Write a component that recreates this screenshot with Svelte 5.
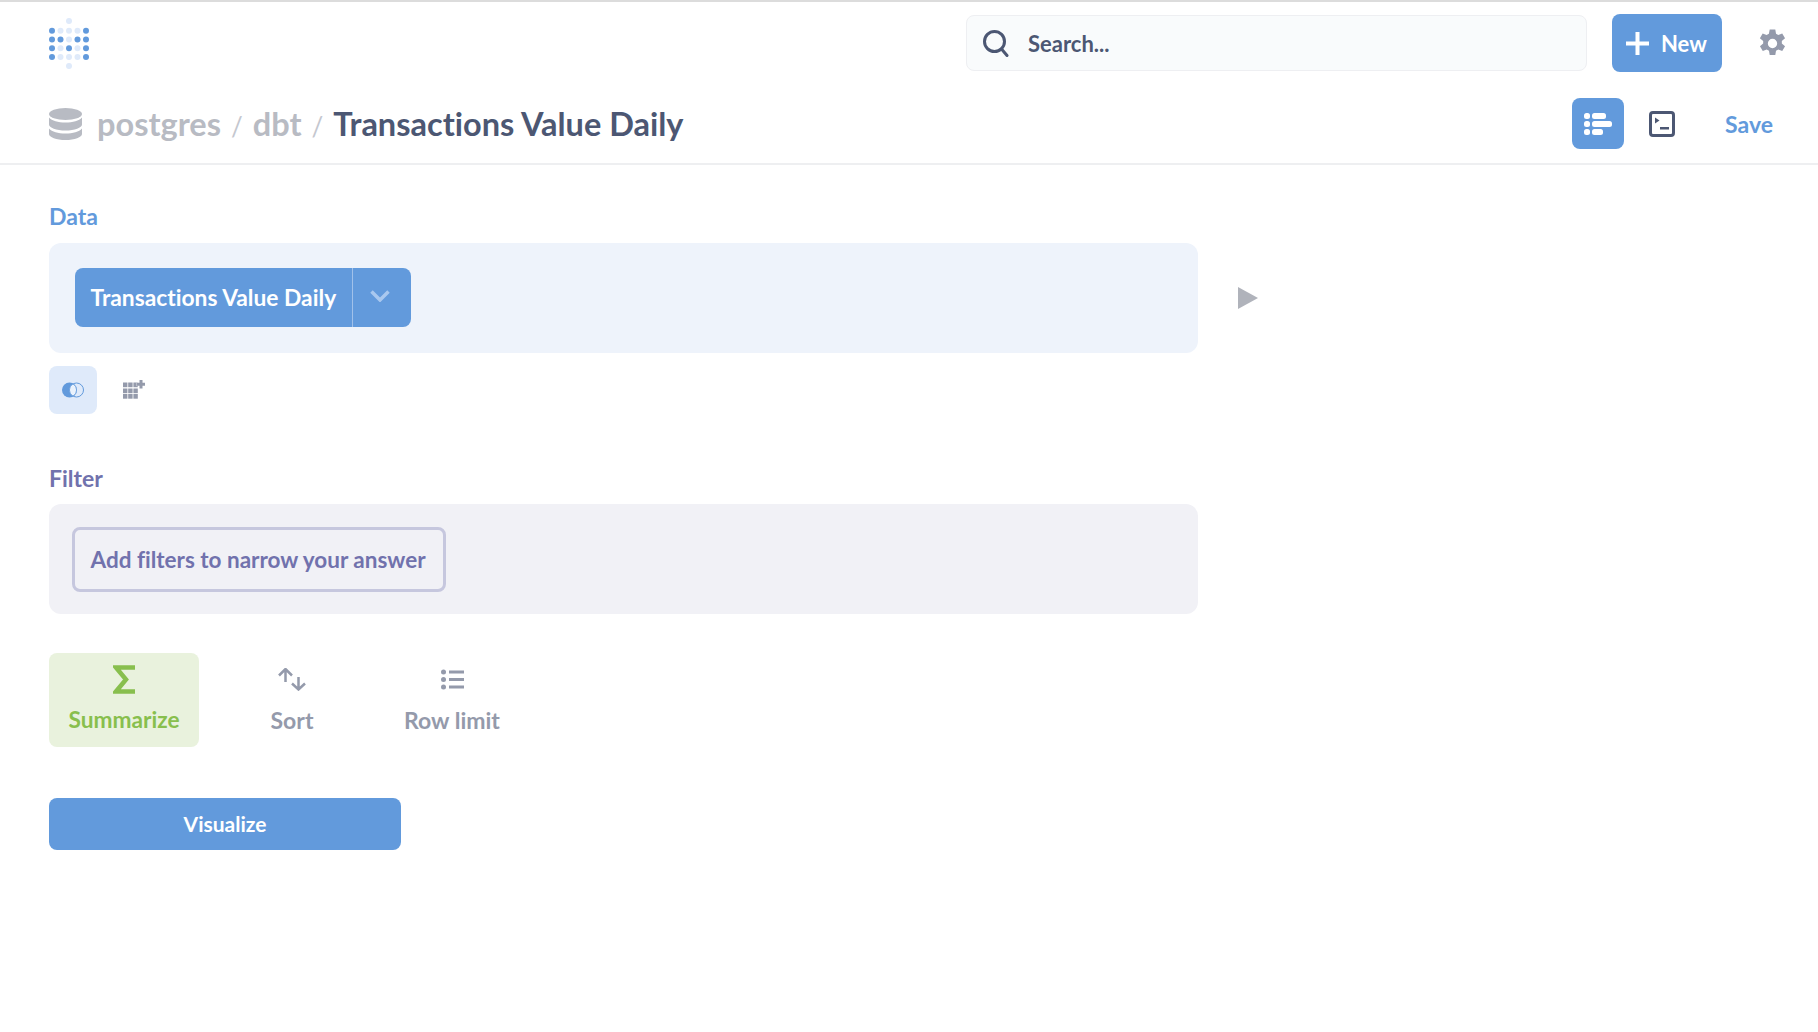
<script>
  const on = [[0,0],[4,0],[0,1],[1,1],[3,1],[4,1],[0,2],[2,2],[4,2],[0,3],[4,3]];
  const isOn = (x, y) => on.some(([a, b]) => a === x && b === y);
  const rows = [0, 1, 2, 3];
  const cols = [0, 1, 2, 3, 4];
</script>

<div class="page">
  <header class="top">
    <svg class="logo" width="40" height="52" viewBox="0 0 40 52">
      <circle cx="20" cy="4" r="3" fill="#dfeafa" />
      <circle cx="20" cy="49" r="3" fill="#dfeafa" />
      {#each rows as y}
        {#each cols as x}
          <circle cx={3 + x * 8.5} cy={13.7 + y * 8.77} r="3" fill={isOn(x, y) ? '#629adc' : '#dfeafa'} />
        {/each}
      {/each}
    </svg>
    <div class="search">
      <svg width="28" height="28" viewBox="0 0 28 28" fill="none" stroke="#4c5773" stroke-width="3">
        <circle cx="12.5" cy="12.5" r="10" />
        <path d="M19.5 20l5.5 6.5" stroke-linecap="round" />
      </svg>
      <span>Search...</span>
    </div>
    <button class="new">
      <svg width="23" height="23" viewBox="0 0 23 23"><path d="M9.5 0h4v9.500H23v4h-9.500V23h-4v-9.500H0v-4h9.500z" fill="#fff" /></svg>
      New
    </button>
    <svg class="gear" width="29" height="29" viewBox="0 0 28 28">
      <path fill="#949aab" fill-rule="evenodd" d="M11.300 0h5.400l.7 4 2.200 1.200 3.800-1.400 2.700 4.600-3.100 2.600v2.500l3.100 2.600-2.700 4.600-3.800-1.400-2.200 1.200-.7 4h-5.400l-.7-4-2.200-1.200-3.800 1.400-2.700-4.600 3.100-2.600v-2.500L1.800 8.400l2.700-4.600 3.800 1.400 2.200-1.200zM14 9a4.500 4.500 0 1 0 0 9 4.500 4.500 0 0 0 0-9z" transform="translate(0 .5)" />
    </svg>
  </header>

  <div class="bar">
    <svg class="db" width="33" height="32" viewBox="0 0 33 32" fill="#b8bbc3">
      <ellipse cx="16.500" cy="6" rx="16.500" ry="6" />
      <path d="M0 10c3 3.500 9 5 16.500 5S30 13.500 33 10v7c0 3.300-7.400 6-16.500 6S0 20.300 0 17z" transform="translate(0 -.5)" />
      <path d="M0 20.500c3 3.500 9 5 16.500 5s13.500-1.500 16.500-5V26c0 3.300-7.400 6-16.500 6S0 29.300 0 26z" />
    </svg>
    <h1>
      <span class="crumb">postgres</span><span class="sep">/</span><span class="crumb">dbt</span><span class="sep">/</span><span class="title">Transactions Value Daily</span>
    </h1>
    <button class="mode">
      <svg width="28" height="24" viewBox="0 0 28 24" fill="#fff">
        <rect x="0" y="1" width="6" height="6" rx="2.500" /><rect x="8" y="1" width="14" height="6" rx="2.500" />
        <rect x="0" y="9" width="6" height="6" rx="2.500" /><rect x="8" y="9" width="20" height="6" rx="2.500" />
        <rect x="0" y="17" width="6" height="6" rx="2.500" /><rect x="8" y="17" width="11" height="6" rx="2.500" />
      </svg>
    </button>
    <svg class="sql" width="26" height="26" viewBox="0 0 26 26">
      <rect x="1.500" y="1.500" width="23" height="23" rx="2.500" fill="none" stroke="#4c5773" stroke-width="3" />
      <path d="M6 6.500l4.500 3-4.500 3z" fill="#4c5773" /><rect x="11" y="16" width="9" height="2.500" fill="#4c5773" />
    </svg>
    <span class="save">Save</span>
  </div>

  <main>
    <div class="label blue">Data</div>
    <div class="row">
      <section class="panel data">
        <div class="chip">
          <span class="chip-text">Transactions Value Daily</span>
          <span class="chip-arrow">
            <svg width="20" height="12" viewBox="0 0 20 12" fill="none" stroke="#a9c8ef" stroke-width="3.500"><path d="M1.500 1.500L10 10l8.500-8.500" /></svg>
          </span>
        </div>
      </section>
      <svg class="run" width="20" height="22" viewBox="0 0 20 22"><path d="M0 0l20 11L0 22z" fill="#b0b3bb" /></svg>
    </div>
    <div class="tools">
      <span class="join">
        <svg width="22" height="16" viewBox="0 0 22 16">
          <circle cx="14.500" cy="8" r="7" fill="none" stroke="#629adc" stroke-width="1" />
          <circle cx="7.500" cy="8" r="7.500" fill="#629adc" />
          <path d="M11 1.900A7 7 0 0 1 11 14.100 7 7 0 0 1 11 1.900z" fill="#eaf2fc" stroke="#629adc" stroke-width=".8" />
        </svg>
      </span>
      <svg class="custom" width="22" height="19" viewBox="0 0 22 19" fill="#949aab">
        {#each [2.500, 8.500, 14] as y}
          {#each [0, 5.200, 10.400] as x}
            <rect {x} {y} width="4.400" height="4.700" />
          {/each}
        {/each}
        <path d="M16.500 0h3v2.750H22v3h-2.500V8.500h-3V5.750h-2.750v-3h2.750z" stroke="#fff" stroke-width=".6" paint-order="stroke" />
      </svg>
    </div>

    <div class="label purple">Filter</div>
    <section class="panel filter">
      <div class="filter-btn">Add filters to narrow your answer</div>
    </section>

    <div class="steps">
      <div class="step active">
        <span class="ico"><svg width="22" height="29" viewBox="0 0 22 29" fill="none" stroke="#88bf4d" stroke-width="4.500"><path d="M22 2.500H3L13 14.500 3 26.500H22" /></svg></span>
        <span>Summarize</span>
      </div>
      <div class="step">
        <span class="ico"><svg width="28" height="23" viewBox="0 0 28 23" fill="none" stroke="#949aab" stroke-width="2.500"><path d="M1 7.500L7.500 1 14 7.500M7.500 1v13M14 15.500l6.500 6 6.500-6M20.500 21V9" /></svg></span>
        <span>Sort</span>
      </div>
      <div class="step">
        <span class="ico"><svg width="23" height="21" viewBox="0 0 23 21" fill="#949aab">
          <circle cx="2.500" cy="3" r="2.500" /><circle cx="2.500" cy="10.500" r="2.500" /><circle cx="2.500" cy="18" r="2.500" />
          <rect x="8" y="1.500" width="15" height="3" /><rect x="8" y="9" width="15" height="3" /><rect x="8" y="16.500" width="15" height="3" />
        </svg></span>
        <span>Row limit</span>
      </div>
    </div>

    <button class="visualize">Visualize</button>
  </main>
</div>

<style>
  :global(body) { margin: 0; background: #fff; }
  .page { width: 1818px; height: 1032px; font-family: Lato, "Open Sans", sans-serif; font-variant-ligatures: none; color: #4c5773; border-top: 2px solid #dcdcdc; box-sizing: border-box; overflow: hidden; }
  button { font-family: inherit; font-variant-ligatures: none; border: 0; }
  .top { display: flex; align-items: center; height: 84px; padding: 0 31px 0 49px; box-sizing: border-box; }
  .logo { margin-top: -2px; }
  .search { display: flex; align-items: center; gap: 18px; width: 621px; height: 56px; margin-left: auto; margin-top: -3px; padding-left: 15px; box-sizing: border-box; background: #f9fbfc; border: 1px solid #eeeff2; border-radius: 8px; font-size: 22px; font-weight: 700; }
  .search span { padding-top: 1px; }
  .new { display: flex; align-items: center; gap: 12px; width: 110px; height: 58px; margin-left: 25px; margin-top: -2px; padding: 0 0 0 14px; background: #629adc; color: #fff; border-radius: 8px; font-size: 22px; font-weight: 700; box-sizing: border-box; }
  .gear { margin-left: 36px; margin-top: -1px; }
  .bar { display: flex; align-items: center; height: 79px; padding: 0 45px 2px 49px; box-sizing: border-box; border-bottom: 2px solid #eeeff1; }
  h1 { display: flex; align-items: baseline; margin: 0 auto 0 15px; font-size: 32.5px; font-weight: 700; }
  .crumb { color: #b8bbc3; }
  .sep { color: #c4c7cf; margin: 0 10px; font-size: 26px; font-weight: 400; }
  .title { color: #4c5773; }
  .mode { display: flex; align-items: center; justify-content: center; width: 52px; height: 51px; margin-top: 0; padding: 0; background: #629adc; border-radius: 8px; }
  .sql { margin-left: 25px; }
  .save { margin-left: 50px; color: #629adc; font-size: 23px; font-weight: 700; }
  main { padding: 0 49px; }
  .label { font-size: 23px; font-weight: 700; line-height: 28px; padding-top: 37px; padding-bottom: 13px; }
  .blue { color: #629adc; }
  .purple { color: #7172ad; }
  .row { display: flex; align-items: center; }
  .panel { display: flex; align-items: center; width: 1149px; height: 110px; border-radius: 12px; box-sizing: border-box; }
  .data { background: #eef3fb; padding-left: 26px; }
  .chip { display: flex; height: 59px; margin-top: -2px; background: #629adc; color: #fff; border-radius: 8px; font-size: 22.8px; font-weight: 700; }
  .chip-text { display: flex; align-items: center; padding: 0 15.500px 0 15.500px; white-space: nowrap; border-right: 1px solid #a1c1ea; }
  .chip-arrow { display: flex; align-items: center; justify-content: center; width: 58px; padding: 0 4px 2px 0; box-sizing: border-box; }
  .run { margin-left: 40px; }
  .tools { display: flex; align-items: center; gap: 26px; margin-top: 13px; }
  .custom { margin-top: -2px; }
  .join { display: flex; align-items: center; justify-content: center; width: 48px; height: 48px; background: #dfeafa; border-radius: 8px; }
  .tools + .label { padding-top: 50px; padding-bottom: 12px; }
  .filter { background: #f1f1f6; padding-left: 23px; }
  .filter-btn { display: flex; align-items: center; height: 65px; padding: 0 17px 0 15.500px; box-sizing: border-box; border: 3px solid #c6c7de; border-radius: 8px; color: #7172ad; font-size: 22.5px; font-weight: 700; white-space: nowrap; }
  .steps { display: flex; margin-top: 39px; height: 94px; }
  .step { display: flex; flex-direction: column; align-items: center; gap: 12px; padding: 11px 0 0; color: #949aab; font-size: 22.7px; line-height: 26px; font-weight: 700; border-radius: 8px; white-space: nowrap; width: 150px; box-sizing: border-box; }
  .ico { display: flex; align-items: center; justify-content: center; height: 31px; }
  .step:nth-child(2) { width: 148px; margin-left: 19px; font-size: 23px; }
  .step:nth-child(3) { width: 130px; margin-left: 21px; font-size: 23px; }
  .active { background: #e9f2dd; color: #88bf4d; }
  .visualize { display: block; width: 352px; height: 52px; margin-top: 51px; padding: 0 0 2px; background: #629adc; color: #fff; border-radius: 8px; font-size: 21px; font-weight: 700; }
</style>
